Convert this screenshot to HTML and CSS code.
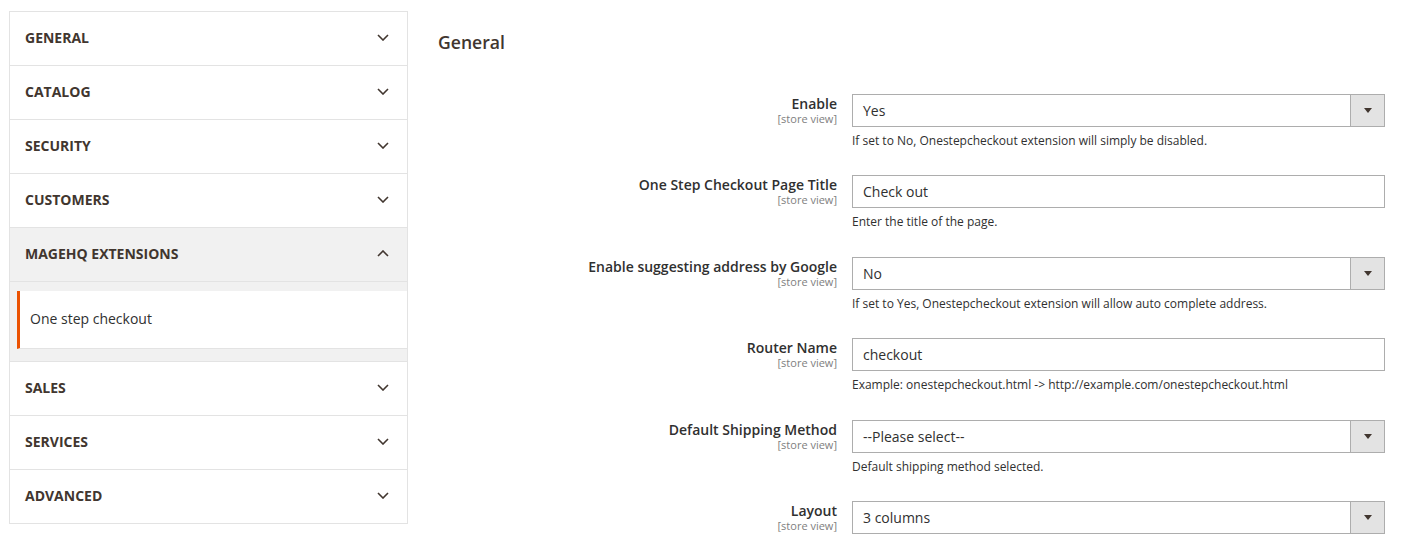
FILE: index.html
```html
<!DOCTYPE html>
<html lang="en">
  <head>
    <meta charset="UTF-8" />
    <meta name="viewport" content="width=device-width, initial-scale=1.0" />
    <title>Configuration - One step checkout</title>
    <link rel="stylesheet" href="styles.css">
  </head>
  <body>
    <div class="page">
      <!-- left config navigation -->
      <div class="nav">
        <div class="nav-title">GENERAL <svg class="chevron" width="12" height="7" viewBox="0 0 12 7"><polyline points="1,1 6,6 11,1" /></svg></div>
        <div class="nav-title">CATALOG <svg class="chevron" width="12" height="7" viewBox="0 0 12 7"><polyline points="1,1 6,6 11,1" /></svg></div>
        <div class="nav-title">SECURITY <svg class="chevron" width="12" height="7" viewBox="0 0 12 7"><polyline points="1,1 6,6 11,1" /></svg></div>
        <div class="nav-title">CUSTOMERS <svg class="chevron" width="12" height="7" viewBox="0 0 12 7"><polyline points="1,1 6,6 11,1" /></svg></div>
        <div class="nav-title open">MAGEHQ EXTENSIONS <svg class="chevron" width="12" height="7" viewBox="0 0 12 7"><polyline points="1,6 6,1 11,6" /></svg></div>
        <div class="nav-items">
          <div class="nav-item current">One step checkout</div>
        </div>
        <div class="nav-title">SALES <svg class="chevron" width="12" height="7" viewBox="0 0 12 7"><polyline points="1,1 6,6 11,1" /></svg></div>
        <div class="nav-title">SERVICES <svg class="chevron" width="12" height="7" viewBox="0 0 12 7"><polyline points="1,1 6,6 11,1" /></svg></div>
        <div class="nav-title">ADVANCED <svg class="chevron" width="12" height="7" viewBox="0 0 12 7"><polyline points="1,1 6,6 11,1" /></svg></div>
      </div>

      <!-- section form -->
      <div class="main">
        <h2>General</h2>

        <div class="field">
          <div class="label">Enable<span class="scope">[store view]</span></div>
          <div class="control">
            <div class="select"><span>Yes</span><span class="arrow"></span></div>
            <div class="note">If set to No, Onestepcheckout extension will simply be disabled.</div>
          </div>
        </div>

        <div class="field">
          <div class="label">One Step Checkout Page Title<span class="scope">[store view]</span></div>
          <div class="control">
            <div class="input">Check out</div>
            <div class="note">Enter the title of the page.</div>
          </div>
        </div>

        <div class="field">
          <div class="label">Enable suggesting address by Google<span class="scope">[store view]</span></div>
          <div class="control">
            <div class="select"><span>No</span><span class="arrow"></span></div>
            <div class="note">If set to Yes, Onestepcheckout extension will allow auto complete address.</div>
          </div>
        </div>

        <div class="field">
          <div class="label">Router Name<span class="scope">[store view]</span></div>
          <div class="control">
            <div class="input">checkout</div>
            <div class="note">Example: onestepcheckout.html -&gt; http://example.com/onestepcheckout.html</div>
          </div>
        </div>

        <div class="field">
          <div class="label">Default Shipping Method<span class="scope">[store view]</span></div>
          <div class="control">
            <div class="select"><span>--Please select--</span><span class="arrow"></span></div>
            <div class="note">Default shipping method selected.</div>
          </div>
        </div>

        <div class="field">
          <div class="label">Layout<span class="scope">[store view]</span></div>
          <div class="control">
            <div class="select"><span>3 columns</span><span class="arrow"></span></div>
          </div>
        </div>
      </div>
    </div>
  </body>
</html>
```

FILE: styles.css
```css
body {
  margin: 0;
  font-family: "Open Sans", "Liberation Sans", sans-serif;
  color: #303030;
  background: #fff;
}

.page {
  display: flex;
  align-items: flex-start;
  padding: 11px 0 0 9px;
}

.nav {
  width: 397px;
  border: 1px solid #e3e3e3;
  border-bottom: none;
}

.nav-title {
  display: flex;
  justify-content: space-between;
  align-items: center;
  height: 51px;
  padding: 0 18px 2px 15px;
  border-bottom: 1px solid #e3e3e3;
  font-size: 14px;
  font-weight: 700;
  color: #41362f;
}

.nav-title.open {
  background-color: #f1f1f1;
}

.chevron polyline {
  fill: none;
  stroke: #41362f;
  stroke-width: 1.6;
}

.nav-items {
  background-color: #f1f1f1;
  padding: 9px 0 12px 7px;
  border-bottom: 1px solid #e3e3e3;
}

.nav-item {
  display: flex;
  align-items: center;
  height: 55px;
  padding: 0 0 2px 10px;
  background-color: #fff;
  border-left: 3px solid transparent;
  border-bottom: 1px solid #e3e3e3;
  font-size: 14px;
}

.nav-item.current {
  border-left-color: #eb5202;
}

.main {
  margin-left: 30px;
}

h2 {
  margin: 19px 0 40px;
  font-size: 17.6px;
  line-height: 24px;
  font-weight: 600;
  color: #41362f;
}

.field {
  display: grid;
  grid-template-columns: 399px 533px;
  column-gap: 15px;
  margin-bottom: 26.45px;
}

.label {
  padding-top: 1px;
  text-align: right;
  font-size: 14px;
  line-height: 18px;
  font-weight: 600;
}

.scope {
  display: block;
  font-size: 11px;
  line-height: 11px;
  font-weight: 400;
  color: #808080;
}

.input,
.select {
  display: flex;
  align-items: center;
  height: 31px;
  border: 1px solid #adadad;
  font-size: 14px;
  padding-left: 10px;
}

.select {
  justify-content: space-between;
}

.arrow {
  position: relative;
  width: 33px;
  height: 31px;
  background-color: #e3e3e3;
  border-left: 1px solid #adadad;
}

/* small triangle inside the select button */
.arrow::after {
  content: "";
  position: absolute;
  left: 13px;
  top: 13px;
  border-left: 4px solid transparent;
  border-right: 4px solid transparent;
  border-top: 5px solid #41362f;
}

.note {
  margin-top: 6px;
  font-size: 12px;
  line-height: 16px;
}
```
